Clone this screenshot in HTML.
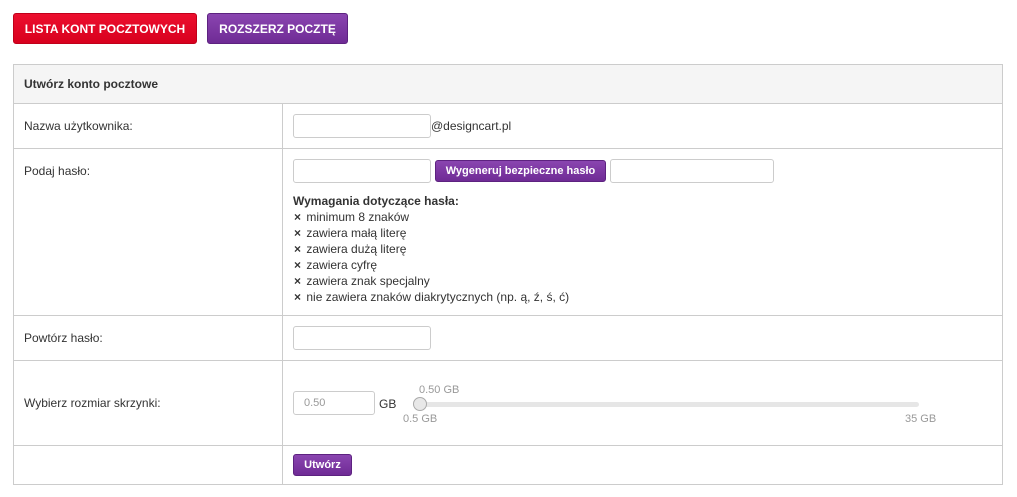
<!DOCTYPE html>
<html><head><meta charset="utf-8"><style>
*{box-sizing:border-box;margin:0;padding:0}
body{width:1017px;height:497px;background:#fff;font-family:"Liberation Sans",sans-serif;font-size:12px;color:#333;position:relative;overflow:hidden}
.a{position:absolute}
.btn{position:absolute;color:#fff;font-weight:bold;border-radius:3px;display:flex;align-items:center;justify-content:center}
.red{background:linear-gradient(#ec0f2e,#d8001e);border:1px solid #c0001a;font-size:12px}
.pur{background:linear-gradient(#8a45b0,#6f2b95);border:1px solid #5d2280}
.inp{position:absolute;border:1px solid #ccc;border-radius:3px;background:#fff}
.line{position:absolute;background:#ccc}
.t{position:absolute;white-space:nowrap}
.l b{margin-right:2px}
</style></head><body>
<div class="btn red" style="left:13px;top:13px;width:184px;height:31px">LISTA KONT POCZTOWYCH</div>
<div class="btn pur" style="left:207px;top:13px;width:141px;height:31px;font-size:12px">ROZSZERZ POCZTĘ</div>

<div class="a" style="left:13px;top:64px;width:990px;height:421px;border:1px solid #ccc"></div>
<div class="a" style="left:14px;top:65px;width:988px;height:38px;background:#f5f5f5"></div>
<div class="line" style="left:13px;top:103px;width:990px;height:1px"></div>
<div class="line" style="left:13px;top:148px;width:990px;height:1px"></div>
<div class="line" style="left:13px;top:315px;width:990px;height:1px"></div>
<div class="line" style="left:13px;top:360px;width:990px;height:1px"></div>
<div class="line" style="left:13px;top:445px;width:990px;height:1px"></div>
<div class="line" style="left:282px;top:103px;width:1px;height:382px"></div>

<div class="t" style="left:24px;top:77px;font-weight:bold">Utwórz konto pocztowe</div>
<div class="t" style="left:24px;top:119px">Nazwa użytkownika:</div>
<div class="t" style="left:24px;top:164px">Podaj hasło:</div>
<div class="t" style="left:24px;top:331px">Powtórz hasło:</div>
<div class="t" style="left:24px;top:396px">Wybierz rozmiar skrzynki:</div>

<div class="inp" style="left:293px;top:114px;width:138px;height:24px"></div>
<div class="t" style="left:431px;top:119px">@designcart.pl</div>

<div class="inp" style="left:293px;top:159px;width:138px;height:24px"></div>
<div class="btn pur" style="left:435px;top:160px;width:171px;height:22px;font-size:11px">Wygeneruj bezpieczne hasło</div>
<div class="inp" style="left:610px;top:159px;width:164px;height:24px"></div>
<div class="t" style="left:293px;top:194px;font-weight:bold">Wymagania dotyczące hasła:</div>
<div class="a l" style="left:294px;top:209px;line-height:16px">
<div><b>×</b> minimum 8 znaków</div>
<div><b>×</b> zawiera małą literę</div>
<div><b>×</b> zawiera dużą literę</div>
<div><b>×</b> zawiera cyfrę</div>
<div><b>×</b> zawiera znak specjalny</div>
<div><b>×</b> nie zawiera znaków diakrytycznych (np. ą, ź, ś, ć)</div>
</div>

<div class="inp" style="left:293px;top:326px;width:138px;height:24px"></div>

<div class="inp" style="left:293px;top:391px;width:82px;height:24px"></div>
<div class="t" style="left:304px;top:397px;color:#999;font-size:11px">0.50</div>
<div class="t" style="left:379px;top:397px">GB</div>
<div class="a" style="left:420px;top:402px;width:499px;height:5px;background:#e6e6e6;border-radius:3px"></div>
<div class="a" style="left:413px;top:397px;width:14px;height:14px;border-radius:50%;background:#e8e8e8;border:1px solid #aaa"></div>
<div class="t" style="left:419px;top:384px;color:#999;font-size:11px">0.50 GB</div>
<div class="t" style="left:403px;top:413px;color:#999;font-size:11px">0.5 GB</div>
<div class="t" style="left:905px;top:413px;color:#999;font-size:11px">35 GB</div>

<div class="btn pur" style="left:293px;top:454px;width:59px;height:22px;font-size:11px">Utwórz</div>
</body></html>
